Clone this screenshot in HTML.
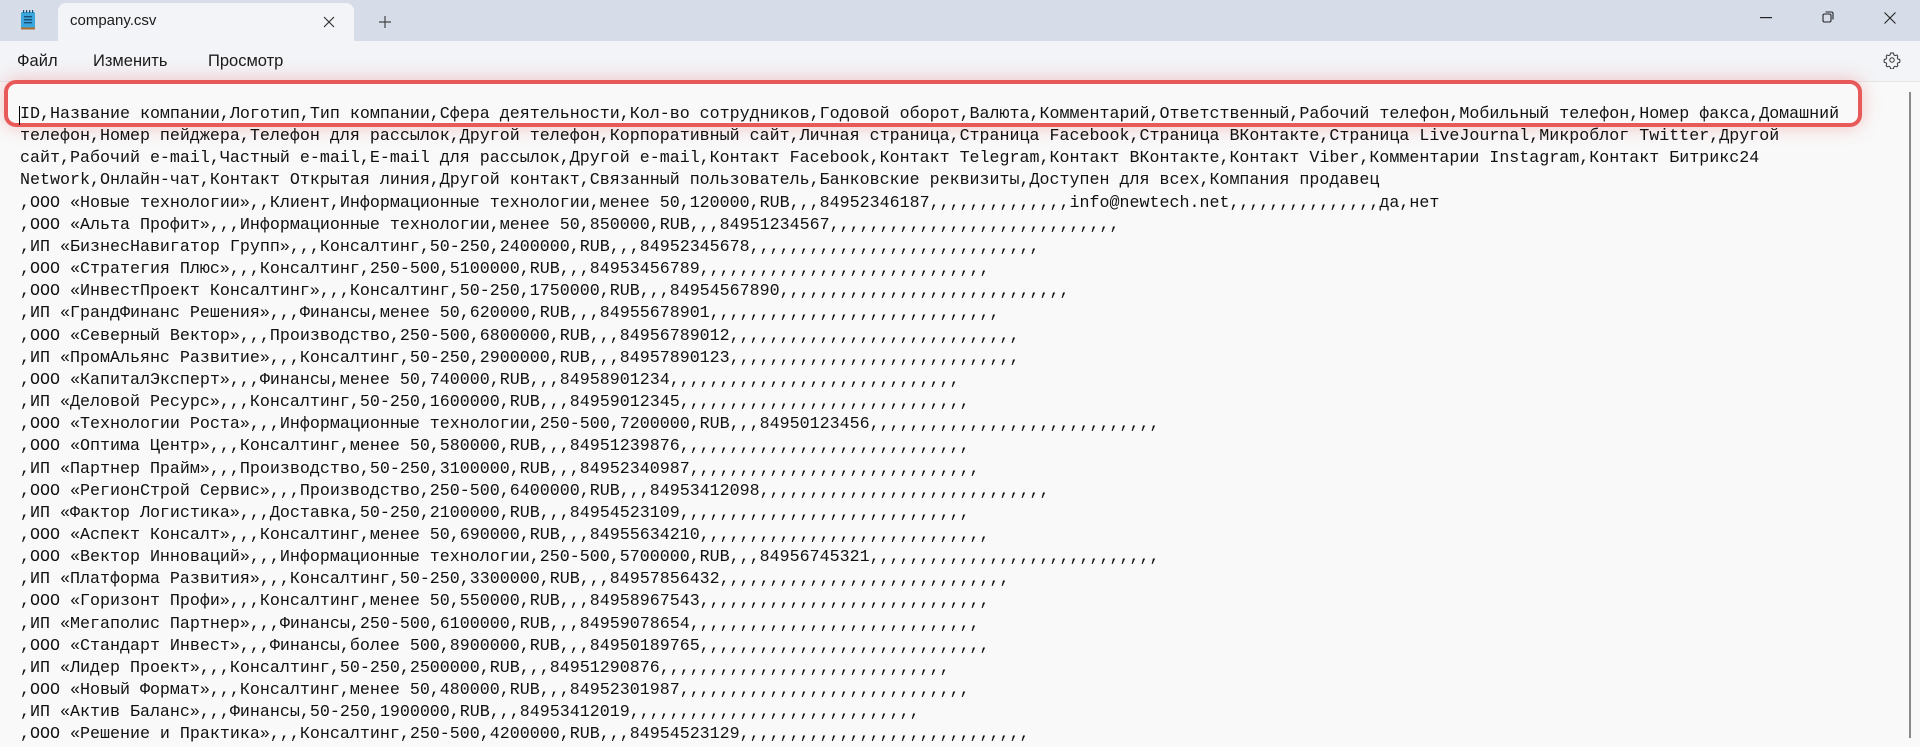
<!DOCTYPE html>
<html><head><meta charset="utf-8">
<style>
*{margin:0;padding:0;box-sizing:border-box}
html,body{width:1920px;height:738px;overflow:hidden;background:#f9f9f9;font-family:"Liberation Sans",sans-serif}
#title{position:absolute;left:0;top:0;width:1920px;height:41px;background:#d6dde9}
#tab{position:absolute;left:58px;top:3px;width:296px;height:38px;background:#f3f4f7;border-radius:8px 8px 0 0}
#tab span{position:absolute;left:12px;top:9px;font-size:15px;color:#1b1b1b}
#menu{position:absolute;left:0;top:41px;width:1920px;height:41px;background:#f3f4f7;border-bottom:1px solid #e6e6e6}
#menu span{position:absolute;top:11px;font-size:16.5px;color:#1b1b1b}
#content{position:absolute;left:20px;top:104px;font-family:"Liberation Mono",monospace;font-size:16.66px;line-height:22.15px;white-space:pre;color:#111}
#box{position:absolute;left:4px;top:80px;width:1858px;height:47px;border:4px solid #e85a5a;border-radius:12px;box-shadow:0 0 18px rgba(232,90,90,.35)}
#caret{position:absolute;left:19px;top:106px;width:1px;height:19px;background:#000}
#sb{position:absolute;left:1909px;top:92px;width:2px;height:646px;background:#8a8a8a}
</style></head><body>
<div id="title"></div>
<div id="tab"><span>company.csv</span></div>
<svg style="position:absolute;left:20px;top:9px" width="16" height="22" viewBox="0 0 16 22">
<rect x="1" y="3" width="14" height="16" rx="1.5" fill="#3aa6dc"/>
<rect x="1" y="18.5" width="14" height="2" fill="#b36b2c"/>
<rect x="4" y="7" width="8" height="1.4" fill="#1a4f7a"/><rect x="4" y="10" width="8" height="1.4" fill="#1a4f7a"/><rect x="4" y="13" width="8" height="1.4" fill="#1a4f7a"/>
<rect x="3" y="1" width="1.2" height="3" fill="#1a4f7a"/><rect x="6" y="1" width="1.2" height="3" fill="#1a4f7a"/><rect x="9" y="1" width="1.2" height="3" fill="#1a4f7a"/><rect x="12" y="1" width="1.2" height="3" fill="#1a4f7a"/>
</svg>
<svg style="position:absolute;left:323px;top:16px" width="12" height="12" viewBox="0 0 12 12"><path d="M1 1L11 11M11 1L1 11" stroke="#333" stroke-width="1.2"/></svg>
<svg style="position:absolute;left:379px;top:16px" width="12" height="12" viewBox="0 0 12 12"><path d="M6 0V12M0 6H12" stroke="#444" stroke-width="1.2"/></svg>
<svg style="position:absolute;left:1760px;top:17px" width="12" height="2"><rect width="12" height="1.2" fill="#222"/></svg>
<svg style="position:absolute;left:1822px;top:11px" width="12" height="12" viewBox="0 0 12 12"><rect x="1" y="3" width="8" height="8" rx="1.5" fill="none" stroke="#222" stroke-width="1.1"/><path d="M3.5 1H9.5Q11 1 11 2.5V8.5" fill="none" stroke="#222" stroke-width="1.1"/></svg>
<svg style="position:absolute;left:1884px;top:12px" width="12" height="12" viewBox="0 0 12 12"><path d="M0.5 0.5L11.5 11.5M11.5 0.5L0.5 11.5" stroke="#222" stroke-width="1.1"/></svg>
<div id="menu"><span style="left:17px">Файл</span><span style="left:93px">Изменить</span><span style="left:208px">Просмотр</span>
<svg style="position:absolute;left:1883px;top:10px" width="18" height="18" viewBox="0 0 24 24"><path d="M12 2.5l2 .3.5 2.4 1.6.9 2.3-.8 1.4 1.5-.8 2.3.9 1.6 2.4.5.3 2-.3 2-2.4.5-.9 1.6.8 2.3-1.4 1.5-2.3-.8-1.6.9-.5 2.4-2 .3-2-.3-.5-2.4-1.6-.9-2.3.8-1.4-1.5.8-2.3-.9-1.6-2.4-.5-.3-2 .3-2 2.4-.5.9-1.6-.8-2.3 1.4-1.5 2.3.8 1.6-.9.5-2.4z" fill="none" stroke="#333" stroke-width="1.3"/><circle cx="12" cy="12" r="3" fill="none" stroke="#333" stroke-width="1.3"/></svg>
</div>
<div id="box"></div>
<div id="content">ID,Название компании,Логотип,Тип компании,Сфера деятельности,Кол-во сотрудников,Годовой оборот,Валюта,Комментарий,Ответственный,Рабочий телефон,Мобильный телефон,Номер факса,Домашний
телефон,Номер пейджера,Телефон для рассылок,Другой телефон,Корпоративный сайт,Личная страница,Страница Facebook,Страница ВКонтакте,Страница LiveJournal,Микроблог Twitter,Другой
сайт,Рабочий e-mail,Частный e-mail,E-mail для рассылок,Другой e-mail,Контакт Facebook,Контакт Telegram,Контакт ВКонтакте,Контакт Viber,Комментарии Instagram,Контакт Битрикс24
Network,Онлайн-чат,Контакт Открытая линия,Другой контакт,Связанный пользователь,Банковские реквизиты,Доступен для всех,Компания продавец
,ООО «Новые технологии»,,Клиент,Информационные технологии,менее 50,120000,RUB,,,84952346187,,,,,,,,,,,,,,info@newtech.net,,,,,,,,,,,,,,,да,нет
,ООО «Альта Профит»,,,Информационные технологии,менее 50,850000,RUB,,,84951234567,,,,,,,,,,,,,,,,,,,,,,,,,,,,,
,ИП «БизнесНавигатор Групп»,,,Консалтинг,50-250,2400000,RUB,,,84952345678,,,,,,,,,,,,,,,,,,,,,,,,,,,,,
,ООО «Стратегия Плюс»,,,Консалтинг,250-500,5100000,RUB,,,84953456789,,,,,,,,,,,,,,,,,,,,,,,,,,,,,
,ООО «ИнвестПроект Консалтинг»,,,Консалтинг,50-250,1750000,RUB,,,84954567890,,,,,,,,,,,,,,,,,,,,,,,,,,,,,
,ИП «ГрандФинанс Решения»,,,Финансы,менее 50,620000,RUB,,,84955678901,,,,,,,,,,,,,,,,,,,,,,,,,,,,,
,ООО «Северный Вектор»,,,Производство,250-500,6800000,RUB,,,84956789012,,,,,,,,,,,,,,,,,,,,,,,,,,,,,
,ИП «ПромАльянс Развитие»,,,Консалтинг,50-250,2900000,RUB,,,84957890123,,,,,,,,,,,,,,,,,,,,,,,,,,,,,
,ООО «КапиталЭксперт»,,,Финансы,менее 50,740000,RUB,,,84958901234,,,,,,,,,,,,,,,,,,,,,,,,,,,,,
,ИП «Деловой Ресурс»,,,Консалтинг,50-250,1600000,RUB,,,84959012345,,,,,,,,,,,,,,,,,,,,,,,,,,,,,
,ООО «Технологии Роста»,,,Информационные технологии,250-500,7200000,RUB,,,84950123456,,,,,,,,,,,,,,,,,,,,,,,,,,,,,
,ООО «Оптима Центр»,,,Консалтинг,менее 50,580000,RUB,,,84951239876,,,,,,,,,,,,,,,,,,,,,,,,,,,,,
,ИП «Партнер Прайм»,,,Производство,50-250,3100000,RUB,,,84952340987,,,,,,,,,,,,,,,,,,,,,,,,,,,,,
,ООО «РегионСтрой Сервис»,,,Производство,250-500,6400000,RUB,,,84953412098,,,,,,,,,,,,,,,,,,,,,,,,,,,,,
,ИП «Фактор Логистика»,,,Доставка,50-250,2100000,RUB,,,84954523109,,,,,,,,,,,,,,,,,,,,,,,,,,,,,
,ООО «Аспект Консалт»,,,Консалтинг,менее 50,690000,RUB,,,84955634210,,,,,,,,,,,,,,,,,,,,,,,,,,,,,
,ООО «Вектор Инноваций»,,,Информационные технологии,250-500,5700000,RUB,,,84956745321,,,,,,,,,,,,,,,,,,,,,,,,,,,,,
,ИП «Платформа Развития»,,,Консалтинг,50-250,3300000,RUB,,,84957856432,,,,,,,,,,,,,,,,,,,,,,,,,,,,,
,ООО «Горизонт Профи»,,,Консалтинг,менее 50,550000,RUB,,,84958967543,,,,,,,,,,,,,,,,,,,,,,,,,,,,,
,ИП «Мегаполис Партнер»,,,Финансы,250-500,6100000,RUB,,,84959078654,,,,,,,,,,,,,,,,,,,,,,,,,,,,,
,ООО «Стандарт Инвест»,,,Финансы,более 500,8900000,RUB,,,84950189765,,,,,,,,,,,,,,,,,,,,,,,,,,,,,
,ИП «Лидер Проект»,,,Консалтинг,50-250,2500000,RUB,,,84951290876,,,,,,,,,,,,,,,,,,,,,,,,,,,,,
,ООО «Новый Формат»,,,Консалтинг,менее 50,480000,RUB,,,84952301987,,,,,,,,,,,,,,,,,,,,,,,,,,,,,
,ИП «Актив Баланс»,,,Финансы,50-250,1900000,RUB,,,84953412019,,,,,,,,,,,,,,,,,,,,,,,,,,,,,
,ООО «Решение и Практика»,,,Консалтинг,250-500,4200000,RUB,,,84954523129,,,,,,,,,,,,,,,,,,,,,,,,,,,,,</div>
<div id="caret"></div>
<div id="sb"></div>
</body></html>
